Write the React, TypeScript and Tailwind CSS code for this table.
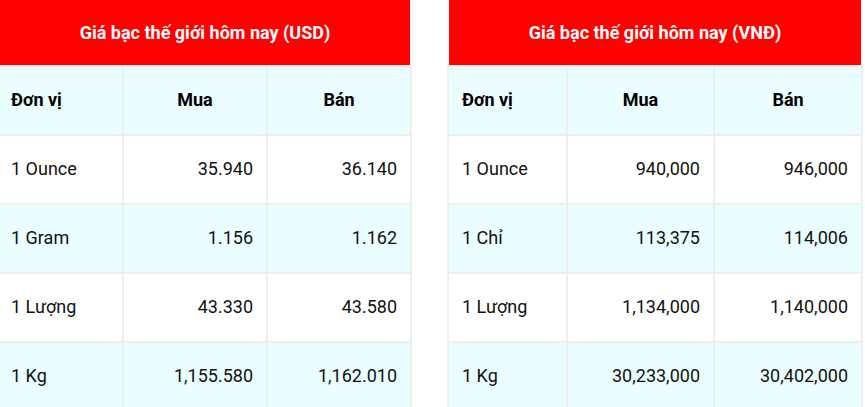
import React from 'react';

type Row = { unit: string; buy: string; sell: string };

const usdRows: Row[] = [
  { unit: '1 Ounce', buy: '35.940', sell: '36.140' },
  { unit: '1 Gram', buy: '1.156', sell: '1.162' },
  { unit: '1 Lượng', buy: '43.330', sell: '43.580' },
  { unit: '1 Kg', buy: '1,155.580', sell: '1,162.010' },
];

const vndRows: Row[] = [
  { unit: '1 Ounce', buy: '940,000', sell: '946,000' },
  { unit: '1 Chỉ', buy: '113,375', sell: '114,006' },
  { unit: '1 Lượng', buy: '1,134,000', sell: '1,140,000' },
  { unit: '1 Kg', buy: '30,233,000', sell: '30,402,000' },
];

function PriceTable({
  title,
  rows,
  cols,
  edge,
}: {
  title: string;
  rows: Row[];
  cols: string;
  edge: boolean;
}) {
  const cell = 'h-[69px] border-r-2 border-b-2 border-[#eeeeee] flex items-center pb-[2px]';
  return (
    <div className="shrink-0 flex flex-col">
      <div
        className={`h-[65px] bg-[#ff0000] flex items-center justify-center pb-[1px] text-white font-bold text-[18px] ${
          edge ? 'mr-[2px]' : 'mx-[2px]'
        }`}
      >
        {title}
      </div>
      <div className={`grid ${cols} border-t-2 border-[#eeeeee] ${edge ? '' : 'border-l-2'}`}>
        {/* tiêu đề cột */}
        <div className={`${cell} ${edge ? 'pl-[11px]' : 'pl-[13px]'} bg-[#ebfeff] font-bold text-black`}>Đơn vị</div>
        <div className={`${cell} bg-[#ebfeff] font-bold text-black justify-center`}>Mua</div>
        <div className={`${cell} bg-[#ebfeff] font-bold text-black justify-center`}>Bán</div>
        {rows.map((r, i) => {
          const bg = i % 2 === 1 ? 'bg-[#ebfeff]' : 'bg-white';
          return (
            <React.Fragment key={i}>
              <div className={`${cell} ${edge ? 'pl-[11px]' : 'pl-[13px]'} ${bg}`}>{r.unit}</div>
              <div className={`${cell} ${bg} justify-end pr-[13px]`}>{r.buy}</div>
              <div className={`${cell} ${bg} justify-end pr-[13px]`}>{r.sell}</div>
            </React.Fragment>
          );
        })}
      </div>
    </div>
  );
}

export default function App() {
  return (
    <div
      className="w-[865px] h-[407px] overflow-hidden bg-white text-[18px] text-[#111111]"
      style={{ fontFamily: 'Roboto, "Noto Sans", sans-serif' }}
    >
      <div className="flex gap-[35px]">
        <PriceTable edge title="Giá bạc thế giới hôm nay (USD)" rows={usdRows} cols="grid-cols-[124px_144px_144px]" />
        <PriceTable edge={false} title="Giá bạc thế giới hôm nay (VNĐ)" rows={vndRows} cols="grid-cols-[119px_147px_148px]" />
      </div>
    </div>
  );
}
